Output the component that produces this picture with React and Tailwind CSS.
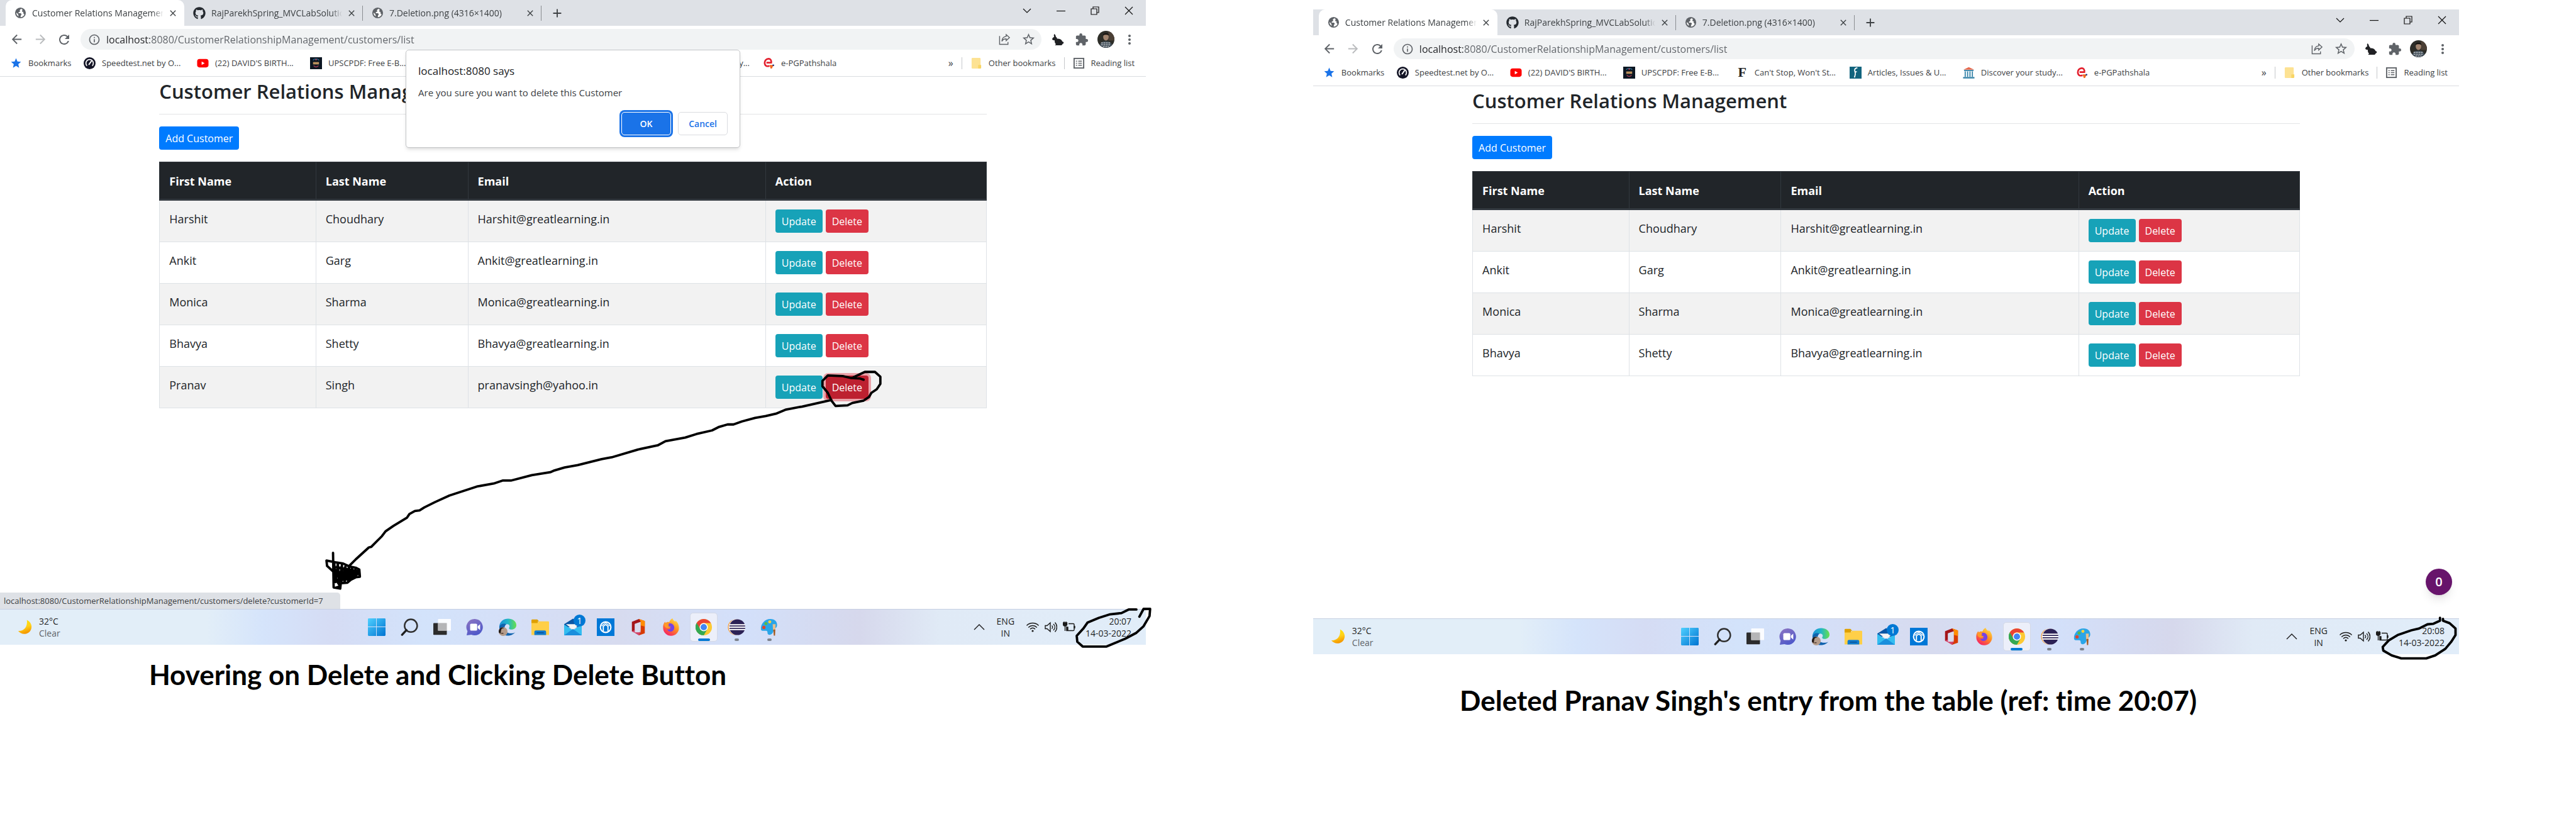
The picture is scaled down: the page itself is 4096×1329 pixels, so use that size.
import React from "react";
import { FaGithub } from "react-icons/fa";
import {
  MdArrowBack,
  MdArrowForward,
  MdRefresh,
  MdInfoOutline,
  MdStarBorder,
  MdStar,
  MdExtension,
  MdMoreVert,
  MdClose,
  MdAdd,
} from "react-icons/md";

/* ---------- Favicons and toolbar icons ---------- */

function GlobeIcon() {
  return (
    <svg viewBox="0 0 20 20" className="size-[19px] shrink-0">
      <circle cx="10" cy="10" r="9" fill="#5f6368" />
      <path
        d="M11 3.2 8.6 5.4 9.6 7.6 7.2 8.6 6.6 10.6H10.6L12 12.4 10.8 14 10 17.2C13.4 17 15.6 15.2 16.6 12.6L14.6 10.4 15 8.4 12.6 7.8 13.4 4.2Z M3.2 9.4 6 12 7 15.8C4.4 14.6 3 12.4 3.2 9.4Z"
        fill="#fff"
      />
    </svg>
  );
}

function ShareIcon() {
  return (
    <svg viewBox="0 0 20 20" className="size-[19px]" fill="none" stroke="#5f6368" strokeWidth="1.5">
      <path d="M1.5 4.5v14h14v-4" />
      <path d="M12.5 2.2 18 7.2l-5.5 5V9.3c-3.6 0-5.8 1.2-7.2 4 .3-4.800 2.600-7.700 7.200-8.200Z" />
    </svg>
  );
}

function RabbitIcon() {
  return (
    <svg viewBox="0 0 20 20" className="size-[20px]" fill="#202124">
      <path d="M4.400 1C5.800 1.600 6.700 3.600 7 5.700 8.300 6.300 8.900 7.300 8.800 8.600 12 8.200 16 9.500 17.400 13.200 18.800 13 19.600 14.200 19.200 15.400 18.900 16.200 18.300 16.400 17.800 16.400 17.300 17.500 16.600 18.300 15.800 19H5.800C5.400 18.200 6.200 17.500 7.200 17.400 5.200 15.600 4.800 13.300 5 11.300 3 11.200 1 10.600 1 9.300 1.400 7.500 2.600 6.400 4.200 5.800 3.600 4 3.600 2.200 4.400 1Z" />
    </svg>
  );
}

function Avatar() {
  return (
    <svg viewBox="0 0 28 28" className="size-[27px]">
      <clipPath id="avatarClip">
        <circle cx="14" cy="14" r="14" />
      </clipPath>
      <g clipPath="url(#avatarClip)">
        <rect width="28" height="28" fill="#2d2d28" />
        <rect x="18" width="10" height="16" fill="#4b3f35" />
        <path d="M3 28c0-8 5-11 11-11s11 3 11 11Z" fill="#3d4a55" />
        <ellipse cx="14" cy="10" rx="4.500" ry="6" fill="#a1846f" />
        <path d="M9 8c0-5 10-6 10 0-3-2-7-2-10 0Z" fill="#15120f" />
        <path d="M6 20h16M6 23h16M9 26h10" stroke="#b9bcc0" strokeWidth="1.500" strokeDasharray="3 1" />
      </g>
    </svg>
  );
}

function SpeedtestIcon() {
  return (
    <svg viewBox="0 0 20 20" className="size-[19px] shrink-0">
      <circle cx="10" cy="10" r="10" fill="#141526" />
      <path d="M5.600 14.400a6.200 6.200 0 1 1 8.800 0" fill="none" stroke="#fff" strokeWidth="1.800" />
      <path d="m9 12 4-5.500" stroke="#fff" strokeWidth="2" strokeLinecap="round" />
    </svg>
  );
}

function YoutubeIcon() {
  return (
    <svg viewBox="0 0 20 20" className="size-[19px] shrink-0">
      <rect x="0.500" y="3" width="19" height="14" rx="4" fill="#f00" />
      <path d="m8 7 5 3-5 3Z" fill="#fff" />
    </svg>
  );
}

function UpscIcon() {
  return (
    <svg viewBox="0 0 20 20" className="size-[19px] shrink-0">
      <rect width="20" height="20" fill="#0c1622" />
      <path d="M5 5c2-3 8-3 10 0" stroke="#2c6a8c" strokeWidth="1.500" fill="none" />
      <rect x="5" y="8" width="10" height="4" fill="#b98f5c" />
      <path d="M6 14c2 3 6 3 8 0" stroke="#a33a52" strokeWidth="1.500" fill="none" />
      <circle cx="10" cy="4" r="1.200" fill="#d8425d" />
    </svg>
  );
}

function ForbesIcon() {
  return (
    <span aria-hidden="true" className="w-[19px] shrink-0 text-center font-['Liberation_Serif',serif] text-[22px] leading-[20px] font-bold text-[#222]">
      F
    </span>
  );
}

function TealIcon() {
  return (
    <svg viewBox="0 0 20 20" className="size-[19px] shrink-0">
      <rect width="20" height="20" fill="#12647e" />
      <path d="M13 2c-5 0-5 4-4 6.500S10 13 8 18M9 8.500h3" fill="none" stroke="#fff" strokeWidth="1.800" />
    </svg>
  );
}

function LibraryIcon() {
  return (
    <svg viewBox="0 0 20 20" className="size-[19px] shrink-0">
      <path d="M1 5 10 .8 19 5Z" fill="#e8674a" />
      <path d="M2 6.500h16M4 8v9M8 8v9M12 8v9M16 8v9" stroke="#2f7fa5" strokeWidth="1.800" />
      <path d="M.5 18.500h19" stroke="#2f7fa5" strokeWidth="2.400" />
    </svg>
  );
}

function PathshalaIcon() {
  return (
    <svg viewBox="0 0 20 20" className="size-[19px] shrink-0">
      <path
        d="M6 9h8c.5-4-1.500-6.500-4.500-6.500C5.500 2.500 3 6 3 9.500 3 14 6.500 16 11 14.500"
        fill="none"
        stroke="#e3202e"
        strokeWidth="2.800"
      />
      <path d="M11 13h7l-3 6h-2Z" fill="#f26a21" />
      <circle cx="17.500" cy="13.500" r="1.500" fill="#2a2f7f" />
    </svg>
  );
}

function FolderMark() {
  return (
    <svg viewBox="0 0 20 20" className="size-[19px] shrink-0">
      <rect x="2" y="1" width="15" height="18" rx="1.500" fill="#fde293" />
      <path d="M13 13h5v4.500a1.500 1.500 0 0 1-1.500 1.500H13Z" fill="#f8d564" />
    </svg>
  );
}

function ReadingIcon() {
  return (
    <svg viewBox="0 0 20 20" className="size-[19px] shrink-0" fill="none" stroke="#5f6368" strokeWidth="2">
      <rect x="2" y="2" width="16" height="16" />
      <path d="M5 6.500h2M5 10h2M5 13.500h2M9 6.500h6M9 10h6M9 13.500h6" strokeWidth="1.600" />
    </svg>
  );
}

/* ---------- Browser chrome ---------- */

function Tab({ icon, title, active, divider }) {
  return (
    <div
      className={
        active
          ? "relative flex w-[284px] items-center gap-[9px] rounded-t-[10px] bg-white pr-3 pl-3.5"
          : "relative flex w-[284px] items-center gap-[9px] pr-3 pl-3.5"
      }
    >
      {icon}
      <span className="flex-1 overflow-hidden mask-r-from-92% text-[14px] leading-5 whitespace-nowrap text-[#3c4043]">{title}</span>
      <button type="button" aria-label="Close tab" className="flex w-3 shrink-0 justify-center">
        <MdClose className="size-[16px] shrink-0 text-[#3c4043]" />
      </button>
      {divider && <span className="absolute top-[9px] right-0 h-6 w-px bg-[#8a8d91]" />}
    </div>
  );
}

function WindowButton({ label, children }) {
  return (
    <button type="button" aria-label={label} className="flex h-[34px] w-[54px] items-center justify-center">
      <svg viewBox="0 0 14 14" className="size-[14px]" fill="none" stroke="#111" strokeWidth="1.200">
        {children}
      </svg>
    </button>
  );
}

function TabStrip() {
  return (
    <div className="flex h-[41px] bg-[#dee1e6] pl-[9px]">
      <div className="flex">
        <Tab active icon={<GlobeIcon />} title="Customer Relations Management" />
        <Tab divider icon={<FaGithub className="size-[20px] shrink-0 text-[#24292f]" />} title="RajParekhSpring_MVCLabSolution" />
        <Tab divider icon={<GlobeIcon />} title="7.Deletion.png (4316×1400)" />
        <button type="button" aria-label="New tab" className="flex w-[50px] items-center justify-center">
          <MdAdd className="size-[22px] text-[#3c4043]" />
        </button>
      </div>
      <div className="ml-auto flex items-start">
        <WindowButton label="Search tabs">
          <path d="m1 4 6 6 6-6" />
        </WindowButton>
        <WindowButton label="Minimize">
          <path d="M0 7.500h14" />
        </WindowButton>
        <WindowButton label="Restore">
          <path d="M1 4h9v9H1ZM4 4V1h9v9h-3" />
        </WindowButton>
        <WindowButton label="Close">
          <path d="m1 1 12 12M13 1 1 13" />
        </WindowButton>
      </div>
    </div>
  );
}

function ToolButton({ label, children }) {
  return (
    <button type="button" aria-label={label} className="flex w-[38px] shrink-0 items-center justify-center text-[#5f6368]">
      {children}
    </button>
  );
}

function Toolbar() {
  return (
    <div className="flex items-center gap-[7px] px-[7px] pt-[5px]">
      <div className="flex">
        <ToolButton label="Back">
          <MdArrowBack className="size-[23px]" />
        </ToolButton>
        <ToolButton label="Forward">
          <MdArrowForward className="size-[23px] text-[#babcbe]" />
        </ToolButton>
        <ToolButton label="Reload">
          <MdRefresh className="size-[24px]" />
        </ToolButton>
      </div>
      <div className="flex h-[33px] flex-1 items-center rounded-full bg-[#f1f3f4] pr-0.5 pl-3">
        <MdInfoOutline className="size-[20px] shrink-0 text-[#5f6368]" />
        <input
          aria-label="Address"
          defaultValue="localhost:8080/CustomerRelationshipManagement/customers/list"
          className="ml-[9px] min-w-0 flex-1 bg-[linear-gradient(90deg,#202124_69px,#5f6368_69px)] bg-clip-text text-[16px] text-transparent outline-none"
        />
        <ToolButton label="Share this page">
          <ShareIcon />
        </ToolButton>
        <ToolButton label="Bookmark this page">
          <MdStarBorder className="size-[23px]" />
        </ToolButton>
      </div>
      <div className="flex items-center">
        <ToolButton label="Rabbit extension">
          <RabbitIcon />
        </ToolButton>
        <ToolButton label="Extensions">
          <MdExtension className="size-[22px]" />
        </ToolButton>
        <ToolButton label="Profile">
          <Avatar />
        </ToolButton>
        <ToolButton label="Menu">
          <MdMoreVert className="size-[24px]" />
        </ToolButton>
      </div>
    </div>
  );
}

const bookmarks = [
  [<SpeedtestIcon />, "Speedtest.net by O..."],
  [<YoutubeIcon />, "(22) DAVID'S BIRTH..."],
  [<UpscIcon />, "UPSCPDF: Free E-B..."],
  [<ForbesIcon />, "Can't Stop, Won't St..."],
  [<TealIcon />, "Articles, Issues & U..."],
  [<LibraryIcon />, "Discover your study..."],
  [<PathshalaIcon />, "e-PGPathshala"],
];

function BookmarkBar() {
  return (
    <nav className="flex h-[43px] items-center border-b border-[#dadce0] pr-[18px] pl-4 text-[13px] leading-5 whitespace-nowrap text-[#3c4043]">
      <a href="#bookmarks" className="flex w-[117px] items-center gap-2.5">
        <MdStar className="size-[19px] shrink-0 text-[#1a73e8]" />
        Bookmarks
      </a>
      {bookmarks.map(([icon, label]) => (
        <a key={label} href="#bookmark" className="flex w-[180px] items-center gap-2.5">
          {icon}
          {label}
        </a>
      ))}
      <div className="ml-auto flex items-center gap-[13px]">
        <button type="button" aria-label="More bookmarks" className="text-[16px] leading-5">
          »
        </button>
        <span className="h-[19px] w-px bg-[#c6c8cb]" />
        <a href="#other" className="flex items-center gap-2.5">
          <FolderMark />
          Other bookmarks
        </a>
        <span className="h-[19px] w-px bg-[#c6c8cb]" />
        <a href="#reading" className="flex items-center gap-2.5">
          <ReadingIcon />
          Reading list
        </a>
      </div>
    </nav>
  );
}

/* ---------- Web page ---------- */

function Customers({ customers, focused }) {
  const head = "border border-[#32383e] border-b-3 px-[15px] pt-4 pb-3.5 text-left";
  const cell = "border border-[#dee2e6] px-[15px] py-3.5 align-top";
  return (
    <main className="mx-[13.9%] pt-1 text-[#212529]">
      <h1 className="text-[31px] leading-[38px] font-semibold">Customer Relations Management</h1>
      <hr className="mt-[17px] border-[#e3e4e6]" />
      <button type="button" className="mt-[19px] block h-[37px] rounded-[4px] bg-[#007bff] px-2.5 text-[16px] leading-6 text-white">
        Add Customer
      </button>
      <table className="mt-[19px] w-full table-fixed border-collapse text-[18px] leading-[30px]">
        <colgroup>
          <col className="w-[18.9%]" />
          <col className="w-[18.4%]" />
          <col className="w-[36%]" />
          <col className="w-[26.7%]" />
        </colgroup>
        <thead className="bg-[#212529] leading-7 text-white">
          <tr>
            <th className={head}>First Name</th>
            <th className={head}>Last Name</th>
            <th className={head}>Email</th>
            <th className={head}>Action</th>
          </tr>
        </thead>
        <tbody>
          {customers.map(([first, last, email]) => (
            <tr key={email} className="odd:bg-[#f2f2f2]">
              <td className={cell}>{first}</td>
              <td className={cell}>{last}</td>
              <td className={cell}>{email}</td>
              <td className={cell}>
                <div className="flex gap-[5px] text-[16px] leading-6 text-white">
                  <button type="button" className="h-[37px] rounded-[4px] bg-[#17a2b8] px-2.5">
                    Update
                  </button>
                  <button
                    type="button"
                    className={
                      first === focused
                        ? "h-[37px] rounded-[4px] bg-[#bd2130] px-2.5 ring-4 ring-[#e15361]/50"
                        : "h-[37px] rounded-[4px] bg-[#dc3545] px-2.5"
                    }
                  >
                    Delete
                  </button>
                </div>
              </td>
            </tr>
          ))}
        </tbody>
      </table>
    </main>
  );
}

function ConfirmDialog() {
  return (
    <div
      role="dialog"
      aria-label="Confirm"
      className="absolute inset-x-0 top-[79px] mx-auto w-[532px] rounded-[5px] border border-[#c4c6c8] bg-white px-[19px] pt-[21px] pb-[19px] shadow-md"
    >
      <p className="text-[17px] leading-6 text-[#202124]">localhost:8080 says</p>
      <p className="mt-3 text-[15px] leading-5 text-[#3c4043]">Are you sure you want to delete this Customer</p>
      <div className="mt-[21px] flex justify-end gap-[11px] text-[14px] leading-5 font-semibold">
        <button type="button" className="h-[37px] w-[79px] rounded-[5px] border border-white bg-[#1a73e8] text-white ring-3 ring-[#1a73e8]">
          OK
        </button>
        <button type="button" className="h-[37px] w-[79px] rounded-[5px] border border-[#dadce0] text-[#1a73e8]">
          Cancel
        </button>
      </div>
    </div>
  );
}

/* ---------- Taskbar ---------- */

function MoonIcon() {
  return (
    <svg viewBox="0 0 28 28" className="size-[26px]">
      <defs>
        <linearGradient id="moon" x1="0" y1="0" x2="0.300" y2="1">
          <stop offset="0" stopColor="#ffe600" />
          <stop offset="0.600" stopColor="#ffd21a" />
          <stop offset="1" stopColor="#f59a00" />
        </linearGradient>
      </defs>
      <path d="M17 1.500c7 3.500 10 11 6.500 17.500-4.500 8.500-16 8.500-21.500 1.500C13 21 18.500 12 17 1.500Z" fill="url(#moon)" />
    </svg>
  );
}

function StartIcon() {
  return (
    <svg viewBox="0 0 30 30" className="size-7">
      <defs>
        <linearGradient id="start" x1="0" y1="0" x2="1" y2="1">
          <stop offset="0" stopColor="#4fd0ff" />
          <stop offset="1" stopColor="#0073d1" />
        </linearGradient>
      </defs>
      <path d="M1.500 0H14v14H0V1.500A1.500 1.500 0 0 1 1.500 0ZM15 0h13.500A1.500 1.500 0 0 1 30 1.500V14H15ZM0 15h14v15H1.500A1.500 1.500 0 0 1 0 28.500ZM15 15h15v13.500a1.500 1.500 0 0 1-1.500 1.500H15Z" fill="url(#start)" />
    </svg>
  );
}

function SearchIcon() {
  return (
    <svg viewBox="0 0 30 30" className="size-7" fill="none">
      <circle cx="17.500" cy="12.500" r="10.800" stroke="#303030" strokeWidth="2.600" />
      <path d="m10 20-7.500 8" stroke="#202020" strokeWidth="3.600" strokeLinecap="round" />
    </svg>
  );
}

function TaskViewIcon() {
  return (
    <svg viewBox="0 0 30 30" className="size-7">
      <rect x="0" y="8" width="23" height="20" rx="1" fill="#2c2c2c" />
      <rect x="8" y="1" width="22" height="20" rx="1" fill="#fff" opacity="0.900" />
      <rect x="8" y="8" width="15" height="13" fill="#b5b5b7" />
    </svg>
  );
}

function ChatIcon() {
  return (
    <svg viewBox="0 0 30 30" className="size-7">
      <defs>
        <linearGradient id="chat" x1="0" y1="0" x2="0.500" y2="1">
          <stop offset="0" stopColor="#8f76c2" />
          <stop offset="1" stopColor="#5059c9" />
        </linearGradient>
      </defs>
      <path d="M15 1a14 14 0 1 1-6 26.800L1 29l1.500-7A14 14 0 0 1 15 1Z" fill="url(#chat)" />
      <rect x="7" y="9" width="12" height="12" rx="2" fill="#fff" />
      <path d="m20 13.500 4-3.500v10l-4-3.500Z" fill="#fff" />
    </svg>
  );
}

function EdgeIcon() {
  return (
    <svg viewBox="0 0 30 30" className="size-7">
      <defs>
        <linearGradient id="edgeTop" x1="0" y1="0.500" x2="1" y2="0.500">
          <stop offset="0" stopColor="#1b8fd8" />
          <stop offset="0.500" stopColor="#21b5c8" />
          <stop offset="1" stopColor="#66e04a" />
        </linearGradient>
      </defs>
      <path d="M1 15C1-4.500 30-3 30 11.500c0 5-4 7.500-8 7.500-3.500 0-5.500-1.500-4-3.500 1.500-2 0-5.500-4-5.500-5 0-8 5-6 10Z" fill="url(#edgeTop)" />
      <path d="M1 15c1-6 9-7.500 12-4.500-5 2-5 15 8 15 3.500 0 5-.5 7-2C21 33 1 32 1 15Z" fill="#0f62ad" />
      <circle cx="7.500" cy="22.500" r="7.500" fill="#b49b8a" />
      <path d="M0 23c0-8 7-9 9-6-3-.5-5 1-5 4l-1 5c-2-1-3-2-3-3Z" fill="#231a16" />
      <path d="M4 25.500h4" stroke="#4a342b" strokeWidth="1.500" />
    </svg>
  );
}

function ExplorerIcon() {
  return (
    <svg viewBox="0 0 30 30" className="size-7">
      <path d="M0 3.500A1.500 1.500 0 0 1 1.500 2H10l3 3h-2v5H0Z" fill="#dfa000" />
      <path d="M0 8h10l3-3h15.500A1.500 1.500 0 0 1 30 6.500v22H0Z" fill="#ffcf48" />
      <path d="M5 28.500v-5.500a2.500 2.500 0 0 1 2.500-2.500h15a2.500 2.500 0 0 1 2.500 2.500v5.500Z" fill="#0f7bd0" />
      <path d="M9 24.500h12" stroke="#0a4e8c" strokeWidth="1.500" />
    </svg>
  );
}

function MailIcon() {
  return (
    <span className="relative">
      <svg viewBox="0 0 30 30" className="size-7">
        <path d="M0 10 15 .5 30 10v5H0Z" fill="#0a56a5" />
        <path d="M3 10h24l-12 9Z" fill="#f4f4f4" />
        <path d="M0 10.500 15 20l15-9.500V29H0Z" fill="#33bdf0" />
        <path d="M0 29 15 18l15 11Z" fill="#1a8fdd" />
      </svg>
      <span className="absolute -top-1.5 -right-1.5 flex size-[19px] items-center justify-center rounded-full bg-[#0078d4] text-[14px] leading-4 text-white">
        1
      </span>
    </span>
  );
}

function StoreIcon() {
  return (
    <svg viewBox="0 0 30 30" className="size-7" fill="none" stroke="#fff">
      <rect width="30" height="30" fill="#0078d7" stroke="none" />
      <circle cx="15" cy="15" r="9" strokeWidth="2.200" />
      <path d="M11 22v-8.500l4-3 4 3V22" strokeWidth="2" />
      <path d="M8 13 15 7.500l7 5.500" strokeWidth="1.400" />
    </svg>
  );
}

function OfficeIcon() {
  return (
    <svg viewBox="0 0 30 30" className="size-7">
      <path d="M16 1 26 4.500v21L16 29Z" fill="#d83b01" />
      <path d="M16 1 26 4.500V14l-7-2V6Z" fill="#ff8c00" />
      <path d="M4 6 16 1l3 5-10 4v10l-3.500 3L4 22Z" fill="#a4161a" />
      <path d="M9 9.500 19 6v18H9Z" fill="#d9dcee" />
      <path d="M9 24h9v-4l1 5-3 4Z" fill="#c9303f" />
      <path d="m4 22 5-2v4h9l-2 5Z" fill="#d4436a" />
    </svg>
  );
}

function FirefoxIcon() {
  return (
    <svg viewBox="0 0 30 30" className="size-7">
      <defs>
        <linearGradient id="fox" x1="0.800" y1="0" x2="0.200" y2="1">
          <stop offset="0" stopColor="#ffe14a" />
          <stop offset="0.450" stopColor="#ff9020" />
          <stop offset="1" stopColor="#f5156c" />
        </linearGradient>
      </defs>
      <path d="M17.500 0c.5 3 3 4 5 6 0-1 0-1.500-.5-2.500 3.500 2.500 6.500 7 6.500 12.500a13.500 13.500 0 0 1-27 .5C1 12 2.500 8 5 5.500L5.500 8C8 6 10 6 12 6.500 13 3.500 15 1 17.500 0Z" fill="url(#fox)" />
      <path d="M10 9c5-2.500 10.500 1.500 10.500 6.500s-3.500 7-6.500 7-5-1.500-5.500-4c3 1 5-.5 6-2-3 0-4.500-1-4-3 .5-1 1-1.500 1-2Z" fill="#7542e5" />
      <path d="M3 9c4-2 7-1.500 9 .5-2 .5-3 1.500-2.500 3 1 1.500 3 1.500 5 1.500-1 2-3.500 3-6 2.500C5 16 3 13 3 9Z" fill="#ff9a28" />
    </svg>
  );
}

function ChromeIcon() {
  return (
    <svg viewBox="0 0 30 30" className="size-7">
      <circle cx="15" cy="15" r="14" fill="#fcc934" />
      <path d="M2.900 8A14 14 0 0 0 15 29l6-10.500L15 15H9Z" fill="#34a853" />
      <path d="M2.900 8A14 14 0 0 1 27.100 8H15a7 7 0 0 0-6.500 4.600L8.900 18.500Z" fill="#ea4335" />
      <path d="M2.900 8 8.900 18.500 12 21v7.600A14 14 0 0 1 2.900 8Z" fill="#34a853" />
      <circle cx="15" cy="15" r="7" fill="#fff" />
      <circle cx="15" cy="15" r="5.400" fill="#4285f4" />
    </svg>
  );
}

function EclipseIcon() {
  return (
    <svg viewBox="0 0 30 30" className="size-7">
      <circle cx="14" cy="15" r="13.500" fill="#f7941e" />
      <circle cx="15.500" cy="15" r="13.800" fill="#e9e4f0" />
      <circle cx="16.500" cy="15" r="13.500" fill="#2c2255" />
      <path d="M3 11h27M2 15h28M3 19h27" stroke="#fff" strokeWidth="2" />
    </svg>
  );
}

function PaintIcon() {
  return (
    <svg viewBox="0 0 30 30" className="size-7">
      <path d="M17 1c8 0 12 5 11.500 11-.5 5-5 5-6 9s-3 7-7 7c-5 0-2-5-4.500-6.500S2 23 1 19C0 9 8 1 17 1Z" fill="#2aa5e8" />
      <circle cx="16" cy="6" r="2.600" fill="#ffd23b" />
      <circle cx="9.500" cy="9" r="2.600" fill="#57b947" />
      <circle cx="6" cy="15.500" r="2.800" fill="#e0452c" />
      <path d="M21 10h5l-.5 10h-4Z" fill="#e7c08e" />
      <path d="M22 19h3.500l-.5 10.500h-2Z" fill="#a55a1f" />
    </svg>
  );
}

const apps = [
  ["Start", <StartIcon />],
  ["Search", <SearchIcon />],
  ["Task view", <TaskViewIcon />],
  ["Chat", <ChatIcon />],
  ["Edge", <EdgeIcon />],
  ["File Explorer", <ExplorerIcon />],
  ["Mail", <MailIcon />],
  ["Assistant", <StoreIcon />],
  ["Office", <OfficeIcon />],
  ["Firefox", <FirefoxIcon />],
  ["Chrome", <ChromeIcon />, "active"],
  ["Eclipse", <EclipseIcon />, "open"],
  ["Paint", <PaintIcon />, "open"],
];

function TrayIcon({ children }) {
  return (
    <svg viewBox="0 0 20 20" className="size-[20px]" fill="none" stroke="#1b1b1b" strokeWidth="1.400">
      {children}
    </svg>
  );
}

function Taskbar({ time }) {
  return (
    <footer className="grid h-[57px] grid-cols-[1fr_auto_1fr] items-center border-t border-[#c6cfe2] bg-[linear-gradient(90deg,#e2eef8_0%,#e2eef8_18%,#d5e4fb_23%,#d5dcf4_29%,#d3e3fb_37%,#d5dff7_45%,#d7dbef_54%,#d3e0fa_65%,#d6d8ec_75%,#e0eaf6_82%,#e1edf9_100%)] text-[14px] leading-[19px] text-[#1f1f1f]">
      <div className="flex items-center gap-[9px] pl-[27px]">
        <MoonIcon />
        <p>
          32°C
          <br />
          <span className="text-[#5f6368]">Clear</span>
        </p>
      </div>
      <div className="flex">
        {apps.map(([name, icon, state]) => (
          <button key={name} type="button" aria-label={name} className="relative flex h-14 w-[52px] items-center justify-center">
            {state === "active" && <span className="absolute inset-x-1 inset-y-[5px] rounded-[5px] border border-[#d4d9e6] bg-[#eceffa]" />}
            <span className="relative flex">{icon}</span>
            {state === "active" && <span className="absolute bottom-[6px] h-1 w-[19px] rounded-full bg-[#0078d4]" />}
            {state === "open" && <span className="absolute bottom-[6px] h-1 w-[7px] rounded-full bg-[#7d828c]" />}
          </button>
        ))}
      </div>
      <div className="flex items-center justify-end pr-[23px]">
        <button type="button" aria-label="Show hidden icons" className="mr-[18px]">
          <TrayIcon>
            <path d="m2 14 8-8 8 8" />
          </TrayIcon>
        </button>
        <p className="mr-[19px] text-center">
          ENG
          <br />
          IN
        </p>
        <div className="mr-[16px] flex gap-[9px]">
          <TrayIcon>
            <path d="M0.500 7.500c5-5.300 14-5.300 19 0M3.200 10.500c4-4 9.600-4 13.600 0M6 13.200c2.500-2.400 5.500-2.400 8 0" />
            <circle cx="10" cy="16" r="1.600" fill="#1b1b1b" stroke="none" />
          </TrayIcon>
          <TrayIcon>
            <path d="M1 7.500h3l5-4.500v14l-5-4.500H1ZM11.500 7.500c1.500 1.500 1.500 3.500 0 5M14 5c3 3 3 7 0 10M16.500 2.500c4 4.500 4 10.500 0 15" />
          </TrayIcon>
          <TrayIcon>
            <path d="M9 4.500h7.500A1.500 1.500 0 0 1 18 6v8a1.500 1.500 0 0 1-1.500 1.500H6V9" />
            <path d="M18.500 8v4" strokeWidth="2.400" />
            <path d="M0.500 3h6v3.500l-1.500 1.500H2L.5 6.500ZM6.500 10h1.500v5H6.500Z" fill="#1b1b1b" />
            <path d="M2 1v3M5 1v3M3.500 8v8" />
          </TrayIcon>
        </div>
        <p className="text-right">
          {time}
          <br />
          14-03-2022
        </p>
      </div>
    </footer>
  );
}

/* ---------- Pen annotations drawn over a desktop ---------- */

function Ink({ strokes }) {
  return (
    <svg
      viewBox="0 0 1920 1120"
      className="pointer-events-none absolute inset-x-0 top-0 w-full overflow-visible"
      fill="none"
      stroke="#000"
      strokeWidth="4"
      strokeLinecap="round"
      strokeLinejoin="round"
    >
      {strokes.map((points) => (
        <polyline key={points} points={points} />
      ))}
    </svg>
  );
}

const firstInk = [
  "1447,636 1441,634 1425,633 1412,630 1387,629 1378,638 1378,647 1387,658 1393,671 1400,680 1420,679 1428,675 1447,671 1456,665 1460,658 1469,652 1475,643 1475,631 1466,623 1449,623 1430,632",
  "1393,670 1344,681 1317,686 1300,693 1283,697 1265,700 1243,706 1229,711 1219,711 1205,715 1193,721 1167,727 1148,733 1115,739 1102,746 1069,753 1025,766 1008,769 968,779 946,783 929,788 922,791 891,796 856,805 842,805 827,810 799,815 753,830 729,841 711,850 703,855 695,856 686,861 682,867 659,881 646,890 640,898 631,907 622,916 618,917 596,937 584,949",
  "558,926 559,984 570,986 571,977 582,976 588,971 596,967 603,966 602,954 596,951 586,949 575,944 562,942 547,939 548,948 558,957",
  "560,942 562,975 566,944 568,976 573,946 572,974 579,948 577,975 585,950 583,972 590,952 589,969 596,953 595,966 601,957 564,950 600,962 563,958 597,966 562,965 588,970 563,971 570,982 564,984",
  "1904,1021 1891,1021 1879,1027 1860,1029 1841,1035 1822,1043 1815,1053 1804,1065 1805,1075 1814,1083 1854,1083 1866,1078 1885,1070 1904,1060 1916,1049 1926,1032 1927,1020 1916,1020 1909,1033",
];

const secondInk = [
  "1888,1019 1888,1024 1877,1029 1867,1030 1853,1037 1840,1040 1817,1048 1802,1057 1792,1068 1793,1074 1807,1082 1823,1087 1865,1087 1880,1082 1897,1071 1907,1059 1914,1048 1914,1037 1904,1028 1893,1024 1893,1021",
];

const everyone = [
  ["Harshit", "Choudhary", "Harshit@greatlearning.in"],
  ["Ankit", "Garg", "Ankit@greatlearning.in"],
  ["Monica", "Sharma", "Monica@greatlearning.in"],
  ["Bhavya", "Shetty", "Bhavya@greatlearning.in"],
  ["Pranav", "Singh", "pranavsingh@yahoo.in"],
];

function Desktop({ customers, focused, time, ink, children }) {
  return (
    <section className="relative">
      <TabStrip />
      <Toolbar />
      <BookmarkBar />
      <div className="relative min-h-[846px]">
        <Customers customers={customers} focused={focused} />
        {focused ? (
          <p className="absolute bottom-0 left-0 w-[541px] rounded-tr-[5px] bg-[#dee1e6] px-1.5 py-[3px] text-[13px] leading-5 text-[#3c4043]">
            localhost:8080/CustomerRelationshipManagement/customers/delete?customerId=7
          </p>
        ) : (
          <span className="absolute right-[11px] bottom-[37px] flex size-[42px] items-center justify-center rounded-full bg-[#67146b] text-[20px] leading-6 font-semibold text-white shadow-lg">
            0
          </span>
        )}
      </div>
      <Taskbar time={time} />
      {children}
      <Ink strokes={ink} />
    </section>
  );
}

export default function App() {
  return (
    <div className="grid grid-cols-[1920fr_280fr_1920fr_196fr] items-start bg-white font-['Open_Sans',sans-serif]">
      <article className="col-start-1 min-w-0">
        <Desktop customers={everyone} focused="Pranav" time="20:07" ink={firstInk}>
          <ConfirmDialog />
        </Desktop>
        <h2 className="mt-[21px] pl-[13%] font-['Lato',sans-serif] text-[44px] leading-[53px] font-bold whitespace-nowrap text-black [font-variant-ligatures:none]">
          Hovering on Delete and Clicking Delete Button
        </h2>
      </article>
      <article className="col-start-3 min-w-0 pt-[15px]">
        <Desktop customers={everyone.slice(0, 4)} time="20:08" ink={secondInk} />
        <h2 className="mt-[47px] pl-[12.8%] font-['Lato',sans-serif] text-[44px] leading-[53px] font-bold whitespace-nowrap text-black [font-variant-ligatures:none]">
          Deleted Pranav Singh's entry from the table (ref: time 20:07)
        </h2>
      </article>
    </div>
  );
}
